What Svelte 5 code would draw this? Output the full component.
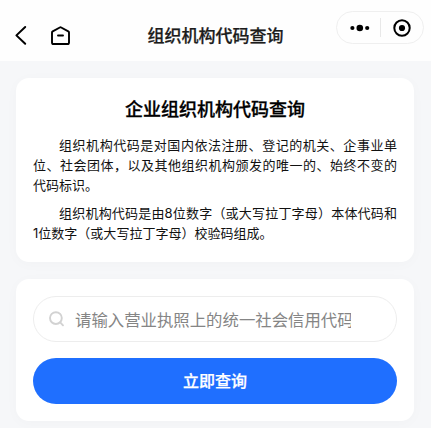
<script lang="ts">
	const paragraphs = [
		'组织机构代码是对国内依法注册、登记的机关、企事业单位、社会团体，以及其他组织机构颁发的唯一的、始终不变的代码标识。',
		'组织机构代码是由8位数字（或大写拉丁字母）本体代码和1位数字（或大写拉丁字母）校验码组成。'
	];

	let code = $state('');
</script>

<div class="page">
	<header>
		<nav>
			<button type="button" class="icon" aria-label="返回">
				<svg width="14" height="21" viewBox="0 0 14 21">
					<path d="M11.2 2 2.4 10.4l8.8 8.4" fill="none" stroke="#000" stroke-width="2" stroke-linecap="round" stroke-linejoin="round" />
				</svg>
			</button>
			<button type="button" class="icon" aria-label="首页">
				<svg width="21" height="21" viewBox="0 0 21 21" fill="none" stroke="#000" stroke-width="1.9" stroke-linecap="round" stroke-linejoin="round">
					<path d="M2 7.6Q2 6.8 2.7 6.4L9.8 2.5Q10.5 2.1 11.2 2.5L18.3 6.4Q19 6.8 19 7.6V17.4Q19 19 17.4 19H3.6Q2 19 2 17.4Z" />
					<path d="M8 10.5h5" />
				</svg>
			</button>
		</nav>
		<div class="title">组织机构代码查询</div>
		<div class="capsule">
			<svg width="20" height="10" viewBox="0 0 20 10">
				<circle cx="2.4" cy="5" r="2.1" />
				<circle cx="9.8" cy="5" r="3.3" />
				<circle cx="17.2" cy="5" r="2.1" />
			</svg>
			<span class="divider"></span>
			<svg width="18" height="18" viewBox="0 0 18 18">
				<circle cx="9" cy="9" r="7.7" fill="none" stroke="#000" stroke-width="2" />
				<circle cx="9" cy="9" r="3.1" />
			</svg>
		</div>
	</header>

	<main>
		<section class="card intro">
			<h1>企业组织机构代码查询</h1>
			{#each paragraphs as text}
				<p>{text}</p>
			{/each}
		</section>

		<section class="card">
			<label class="search">
				<svg width="16" height="16" viewBox="0 0 16 16" fill="none" stroke="#d2d2d2" stroke-width="1.9" stroke-linecap="round">
					<circle cx="6.9" cy="7.1" r="5.9" />
					<path d="m11.2 11.4 2.8 2.9" />
				</svg>
				<input bind:value={code} placeholder="请输入营业执照上的统一社会信用代码" />
			</label>
			<button type="button" class="submit">立即查询</button>
		</section>
	</main>
</div>

<style>
	:global(body) { margin: 0; background: #f6f7f9; }
	.page {
		min-height: 428px;
		overflow: hidden;
		box-sizing: border-box;
		font-family: 'Noto Sans CJK SC', sans-serif;
		color: #111;
	}
	button { border: 0; padding: 0; font-family: inherit; }

	header {
		display: grid;
		grid-template-columns: 1fr auto 1fr;
		align-items: start;
		height: 61px;
		background: #fefefe;
	}
	nav { display: flex; gap: 22px; padding: 25px 0 0 14px; }
	.icon { display: flex; background: none; }
	.title {
		padding-top: 23px;
		font-size: 17px;
		line-height: 24px;
		font-weight: 500;
		color: #1c1c1c;
		-webkit-text-stroke: 0.25px #1c1c1c;
	}
	.capsule {
		display: flex;
		align-items: center;
		justify-self: end;
		box-sizing: border-box;
		width: 88px;
		height: 33px;
		margin: 11px 7px 0 0;
		padding-left: 13px;
		border: 1px solid #efefef;
		border-radius: 17px;
	}
	.divider { width: 1px; height: 19px; margin: 0 12px 0 10px; background: #e8e8e8; }

	main { padding: 17px 17px 7px 16px; }
	.card {
		box-sizing: border-box;
		padding: 17px;
		border-radius: 13px;
		background: #fff;
		box-shadow: 0 2px 14px rgba(0, 0, 0, 0.025);
	}
	.intro { height: 184px; margin-bottom: 17px; }
	h1 {
		margin: -1px 0 13px;
		font-size: 18px;
		line-height: 28px;
		font-weight: 500;
		text-align: center;
		color: #000;
		-webkit-text-stroke: 0.3px #000;
	}
	p {
		margin: 0 0 8px;
		font-family: Inter, 'Noto Sans CJK SC', sans-serif;
		font-size: 13.03px;
		line-height: 20px;
		text-indent: 2em;
		text-align: justify;
	}

	.search {
		display: flex;
		align-items: center;
		box-sizing: border-box;
		height: 46px;
		padding: 0 45px 0 15px;
		border: 1px solid #ededed;
		border-radius: 23px;
	}
	.search svg { flex: none; margin-right: 10px; }
	input {
		flex: 1;
		min-width: 0;
		padding: 0 0 1px;
		border: 0;
		outline: none;
		background: none;
		font-family: inherit;
		font-size: 16.4px;
	}
	input::placeholder { color: #858585; }
	.submit {
		display: block;
		width: 100%;
		height: 46px;
		margin-top: 16px;
		padding-bottom: 2px;
		border-radius: 23px;
		background: #1f6fff;
		color: #fff;
		font-size: 16px;
		font-weight: 500;
		-webkit-text-stroke: 0.25px #fff;
	}
</style>
